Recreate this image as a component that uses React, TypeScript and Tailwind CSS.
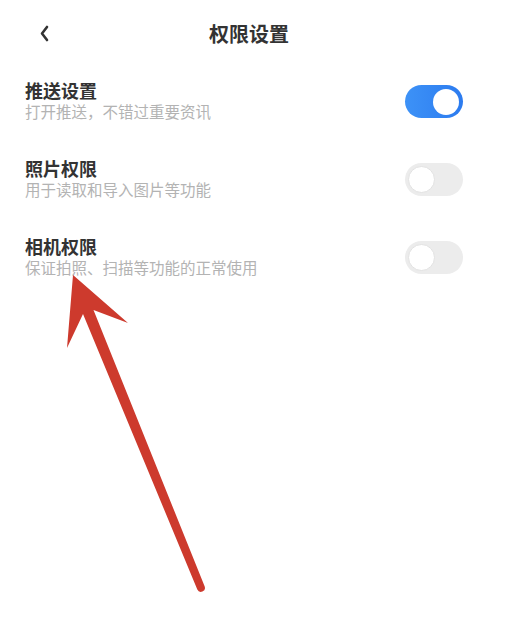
import React from "react";

type Row = { title: string; desc: string; on: boolean };

const rows: Row[] = [
  { title: "推送设置", desc: "打开推送，不错过重要资讯", on: true },
  { title: "照片权限", desc: "用于读取和导入图片等功能", on: false },
  { title: "相机权限", desc: "保证拍照、扫描等功能的正常使用", on: false },
];

function Toggle({ on }: { on: boolean }) {
  if (on) {
    return (
      <div className="w-[58px] h-[33px] rounded-full bg-gradient-to-r from-[#3d92f7] to-[#2c7bef] flex items-center justify-end pr-[4px] shrink-0">
        <div className="w-[26px] h-[26px] rounded-full bg-white" />
      </div>
    );
  }
  return (
    <div className="w-[58px] h-[33px] rounded-full bg-[#ececec] flex items-center justify-start pl-[3px] shrink-0">
      <div className="w-[27px] h-[27px] rounded-full bg-white border border-[#e2e2e2]" />
    </div>
  );
}

export default function App() {
  return (
    <div
      className="relative w-[508px] h-[628px] bg-white overflow-hidden"
      style={{ fontFamily: '"Noto Sans CJK SC", "Noto Sans", sans-serif' }}
    >
      <div className="relative h-[68px] flex items-center justify-center">
        <svg
          className="absolute left-[38px] top-[24px]"
          width="14"
          height="20"
          viewBox="0 0 14 20"
        >
          <polyline
            points="9,3 4,9.5 9,16"
            fill="none"
            stroke="#333"
            strokeWidth="2.6"
            strokeLinecap="round"
            strokeLinejoin="round"
          />
        </svg>
        <span className="text-[20px] leading-[28px] font-semibold text-[#333] -ml-[10px]">
          权限设置
        </span>
      </div>

      <div className="mt-[12px] flex flex-col gap-[35px] pl-[25px] pr-[45px]">
        {rows.map((r) => (
          <div key={r.title} className="flex items-center justify-between h-[43px]">
            <div className="flex flex-col">
              <span className="text-[18px] leading-[20px] font-semibold text-[#333]">
                {r.title}
              </span>
              <span className="text-[15.5px] leading-[23px] text-[#b3b3b3]">
                {r.desc}
              </span>
            </div>
            <Toggle on={r.on} />
          </div>
        ))}
      </div>

      <svg
        className="absolute left-0 top-0 pointer-events-none"
        width="508"
        height="628"
        viewBox="0 0 508 628"
      >
        <path
          d="M73,275 L128,323 L93.5,310 L204.7,586.5 A4,4 0 0 1 197.3,589.5 L83,314 L67,348 Z"
          fill="#cd3a2d"
        />
      </svg>
    </div>
  );
}
